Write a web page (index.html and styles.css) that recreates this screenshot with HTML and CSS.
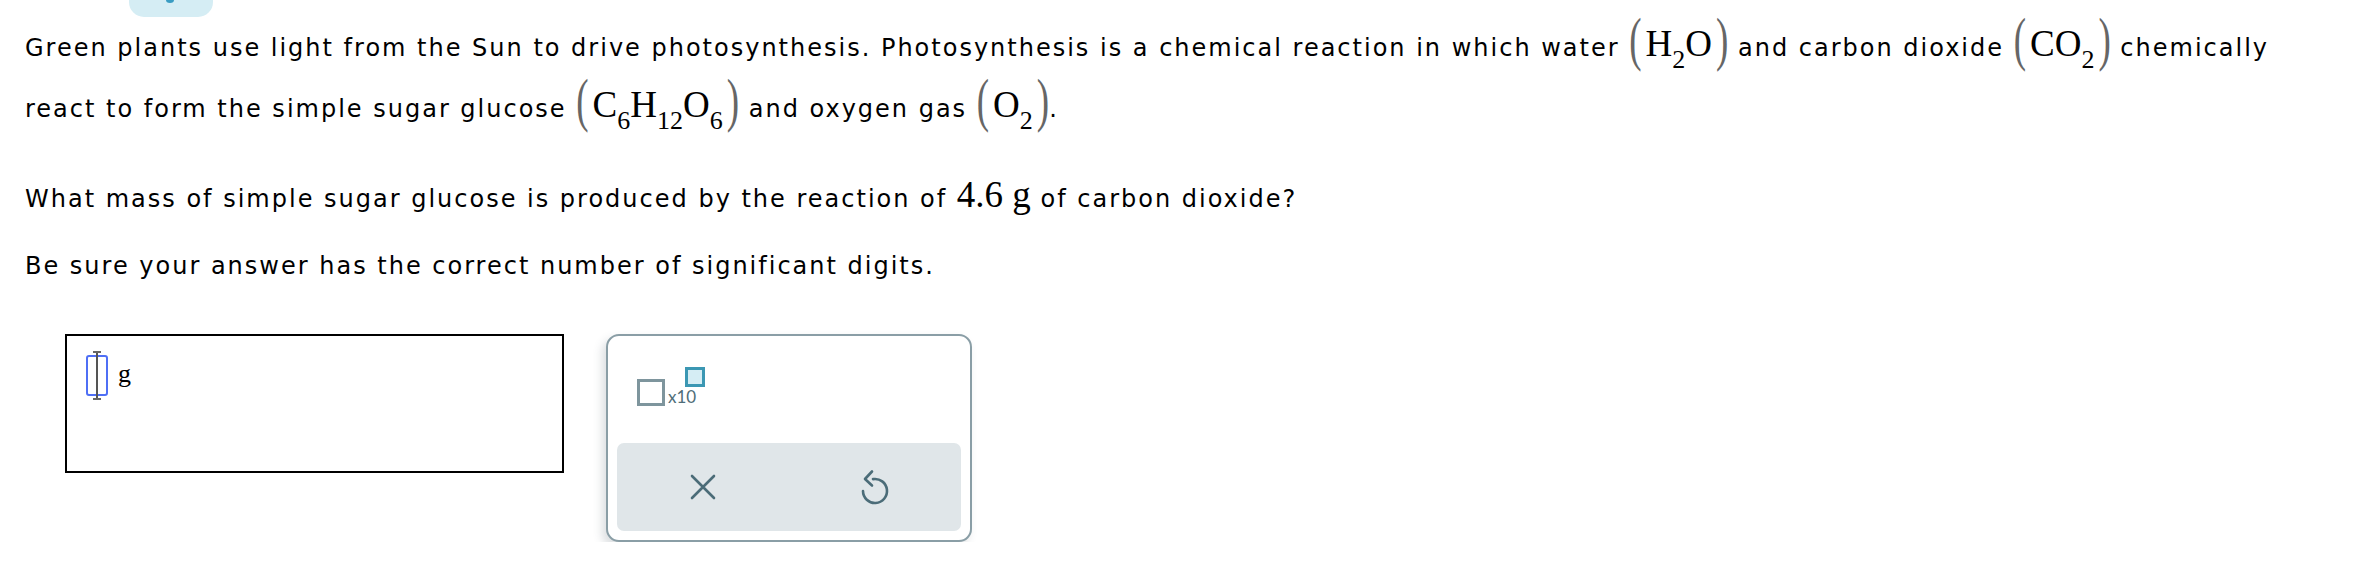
FILE: index.html
```html
<!DOCTYPE html>
<html lang="en">
<head>
<meta charset="utf-8">
<title>Photosynthesis question</title>
<link rel="stylesheet" href="styles.css">
</head>
<body>
<div class="tab"><span class="tab-mark"></span></div>
<div class="content">
  <p class="para para-lead">Green plants use light from the Sun to drive photosynthesis. Photosynthesis is a chemical reaction in which water <span class="math"><span class="paren">(</span><span class="inner">H<sub class="sub">2</sub>O</span><span class="paren">)</span></span> and carbon dioxide <span class="math"><span class="paren">(</span><span class="inner">CO<sub class="sub">2</sub></span><span class="paren">)</span></span> chemically react to form the simple sugar glucose <span class="math"><span class="paren">(</span><span class="inner">C<sub class="sub">6</sub>H<sub class="sub">12</sub>O<sub class="sub">6</sub></span><span class="paren">)</span></span> and oxygen gas <span class="math"><span class="paren">(</span><span class="inner">O<sub class="sub">2</sub></span><span class="paren">)</span></span>.</p>
  <p class="para para-q">What mass of simple sugar glucose is produced by the reaction of <span class="math">4.6 g</span> of carbon dioxide?</p>
  <p class="para para-note">Be sure your answer has the correct number of significant digits.</p>

  <div class="widgets">
    <div class="answer">
      <span class="cursor"><span class="ibeam"></span></span>
      <span class="unit">g</span>
    </div>
    <div class="tools">
      <div class="sci">
        <span class="sci-base"></span>
        <span class="sci-x10">x10</span>
        <span class="sci-exp"></span>
      </div>
      <div class="actions">
        <div class="action">
          <svg width="26" height="26" viewBox="0 0 26 26" class="icon">
            <path d="M2 2 L24 24 M24 2 L2 24" fill="none" stroke="#4b6c78" stroke-width="2.6" stroke-linecap="round"/>
          </svg>
        </div>
        <div class="action">
          <svg width="32" height="36" viewBox="0 0 32 36" class="icon">
            <path d="M14 10.15 A12 12 0 1 1 4 22" fill="none" stroke="#4b6c78" stroke-width="2.6" stroke-linecap="round"/>
            <path d="M13 2.5 L6 10 L13 16.5" fill="none" stroke="#4b6c78" stroke-width="2.6" stroke-linecap="round" stroke-linejoin="round"/>
          </svg>
        </div>
      </div>
    </div>
  </div>
</div>
</body>
</html>
```

FILE: styles.css
```css
html, body {
  margin: 0;
  padding: 0;
  background: #ffffff;
}

body {
  font-family: "DejaVu Sans", Verdana, sans-serif;
  font-size: 24px;
  letter-spacing: 2px;
  color: #000000;
}

.tab {
  width: 84px;
  height: 17px;
  margin-left: 129px;
  background: #d5edf4;
  border-radius: 0 0 15px 15px;
  position: relative;
}

.tab-mark {
  position: absolute;
  left: 37px;
  top: -3px;
  width: 8px;
  height: 6px;
  border-radius: 50%;
  background: #3a9cc2;
}

.content {
  padding-left: 25px;
  width: 2310px;
}

.para {
  margin: 0;
}

.para-lead {
  margin-top: 1px;
  line-height: 61px;
}

.para-q {
  margin-top: 36px;
  line-height: 40px;
}

.para-note {
  margin-top: 27px;
  line-height: 40px;
}

.math {
  font-family: "Liberation Serif", "Times New Roman", serif;
  font-size: 37px;
  letter-spacing: 0;
  line-height: 1;
}

.inner {
  padding: 0 4px;
}

.sub {
  font-size: 26px;
  line-height: 0;
  vertical-align: -12px;
}

.paren {
  display: inline-block;
  color: #666;
  transform: scaleY(1.6);
  transform-origin: 50% 70%;
}

.widgets {
  display: flex;
  align-items: flex-start;
  gap: 42px;
  margin: 48px 0 0 40px;
}

.answer {
  box-sizing: border-box;
  width: 499px;
  height: 139px;
  border: 2px solid #000;
  padding: 19px 0 0 19px;
  display: flex;
  align-items: flex-start;
  gap: 10px;
}

.cursor {
  box-sizing: border-box;
  width: 22px;
  height: 41px;
  border: 2.5px solid #4f6ff5;
  border-radius: 3px;
  position: relative;
}

.ibeam {
  position: absolute;
  left: 7.5px;
  top: -6px;
  width: 2px;
  height: 49px;
  background: #555;
}

.ibeam::before,
.ibeam::after {
  content: "";
  position: absolute;
  left: -3px;
  width: 8px;
  height: 2px;
  background: #666;
}

.ibeam::before { top: 0; }
.ibeam::after { bottom: 0; }

.unit {
  font-family: "Liberation Serif", "Times New Roman", serif;
  font-size: 26px;
  letter-spacing: 0;
  line-height: 1;
  margin-top: 6px;
}

.tools {
  box-sizing: border-box;
  width: 366px;
  height: 208px;
  border: 2px solid #8a9ea6;
  border-radius: 13px;
  box-shadow: -4px 5px 10px rgba(60, 80, 90, 0.18);
  padding: 0 9px 9px 9px;
  display: flex;
  flex-direction: column;
  justify-content: space-between;
  background: #fff;
}

.sci {
  position: relative;
  display: flex;
  align-items: flex-end;
  margin: 43px 0 0 20px;
  height: 27px;
}

.sci-base {
  box-sizing: border-box;
  width: 28px;
  height: 27px;
  border: 3px solid #7e959d;
}

.sci-x10 {
  font-family: "Lato", "Open Sans", sans-serif;
  font-size: 17px;
  letter-spacing: 0;
  line-height: 1;
  color: #4f6d78;
  margin-left: 3px;
  margin-bottom: 1px;
}

.sci-exp {
  position: absolute;
  left: 48px;
  top: -12px;
  box-sizing: border-box;
  width: 20px;
  height: 20px;
  border: 3px solid #3b97b3;
  background: #d5edf4;
}

.actions {
  display: flex;
  height: 88px;
  background: #e0e6e9;
  border-radius: 7px;
}

.action {
  flex: 1;
  display: flex;
  align-items: center;
  justify-content: center;
}

.icon {
  display: block;
}
```
